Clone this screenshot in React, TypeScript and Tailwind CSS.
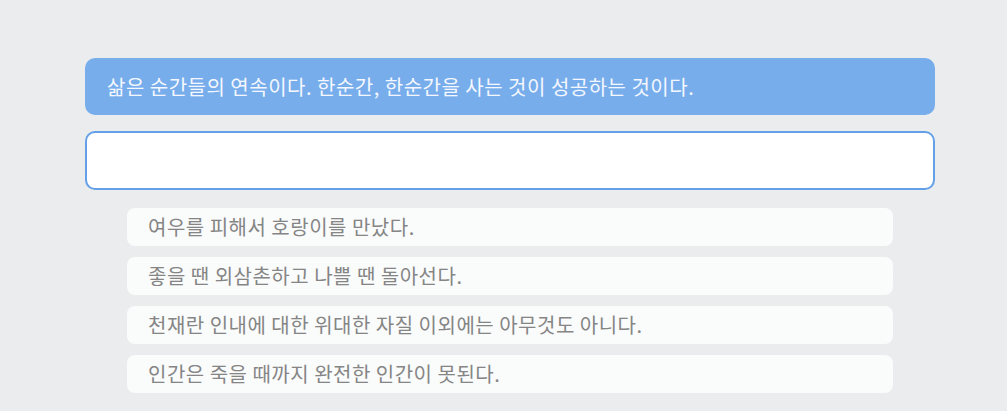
import React from "react";

const items = [
  "여우를 피해서 호랑이를 만났다.",
  "좋을 땐 외삼촌하고 나쁠 땐 돌아선다.",
  "천재란 인내에 대한 위대한 자질 이외에는 아무것도 아니다.",
  "인간은 죽을 때까지 완전한 인간이 못된다.",
];

export default function App() {
  return (
    <div
      className="w-[1007px] h-[411px] bg-[#ebecee] pl-[85px] pt-[58px] box-border overflow-hidden"
      style={{ fontFamily: '"Noto Sans CJK KR", "Noto Sans", sans-serif' }}
    >
      <div className="w-[850px]">
        <div className="h-[57px] rounded-[10px] bg-[#78adec] px-[22px] flex items-center text-[20px] tracking-[0.5px] text-[#f4f8fe]">
          삶은 순간들의 연속이다. 한순간, 한순간을 사는 것이 성공하는 것이다.
        </div>
        <input
          type="text"
          className="mt-[16px] block w-full h-[59px] rounded-[10px] border-2 border-[#63a0e8] bg-white outline-none px-[20px] text-[18px]"
        />
        <div className="mx-[42px] mt-[18px] flex flex-col gap-[11px]">
          {items.map((t) => (
            <div
              key={t}
              className="h-[38px] rounded-[8px] bg-[#fafbfb] px-[21px] flex items-center text-[20px] tracking-[0.5px] text-[#858585]"
            >
              {t}
            </div>
          ))}
        </div>
      </div>
    </div>
  );
}
